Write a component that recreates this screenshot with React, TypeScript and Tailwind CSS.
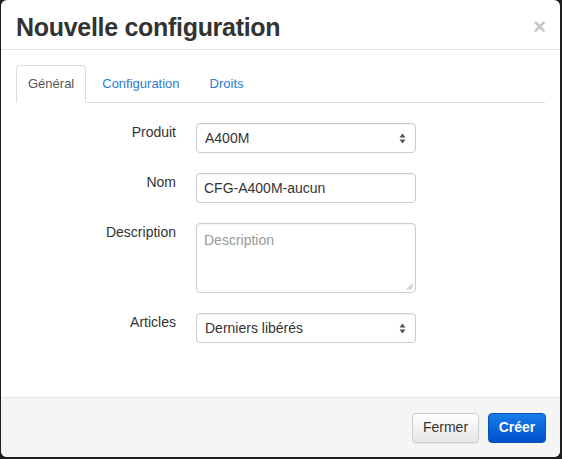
import { ReactNode } from "react";

type FieldProps = {
  label: string;
  children: ReactNode;
};

const Field = ({ label, children }: FieldProps) => (
  <>
    <label className="text-right text-[14px] leading-[18px] text-[#333]">{label}</label>
    <div>{children}</div>
  </>
);

const SelectArrows = () => (
  <svg width="7" height="11" viewBox="0 0 7 11" className="shrink-0">
    <path d="M3.5 0.5 L6.5 4.5 L0.5 4.5 Z" fill="#555" />
    <path d="M3.5 10.5 L6.5 6.5 L0.5 6.5 Z" fill="#555" />
  </svg>
);

const FakeSelect = ({ value }: { value: string }) => (
  <div className="flex h-[30px] w-[220px] items-center justify-between rounded-[4px] border border-[#ccc] bg-white pl-[8px] pr-[9px] text-[14px] text-[#333] shadow-[inset_0_1px_1px_rgba(0,0,0,0.05)]">
    <span>{value}</span>
    <SelectArrows />
  </div>
);

const tabs = ["Général", "Configuration", "Droits"];

const App = () => {
  return (
    <div className="h-[459px] w-[562px] bg-[#1e1e1e] pb-[2px] pl-[1px] pr-[2px] font-['Liberation_Sans',Arial,sans-serif]">
      <div className="flex h-full flex-col overflow-hidden rounded-[6px] bg-white">
        {/* header */}
        <div className="flex h-[50px] shrink-0 items-center justify-between border-b border-[#e5e5e5] pl-[15px] pr-[14px] pt-[5px]">
          <h4 className="text-[25px] font-bold leading-none tracking-[-0.3px] text-[#333]">Nouvelle configuration</h4>
          <span className="text-[22px] font-bold leading-none text-[#c7c7c7]">×</span>
        </div>

        {/* body */}
        <div className="flex-1 px-[15px] pt-[15px]">
          <ul className="flex border-b border-[#ddd] text-[13px]">
            {tabs.map((t, i) => (
              <li
                key={t}
                className={
                  i === 0
                    ? "-mb-px mr-[2px] rounded-t-[4px] border border-b-transparent border-[#ddd] bg-white px-[11px] py-[9px] leading-[17px] text-[#555]"
                    : "mr-[2px] rounded-t-[4px] border border-transparent px-[13px] py-[9px] leading-[17px] text-[#2b7bd3]"
                }
              >
                {t}
              </li>
            ))}
          </ul>

          <div className="mt-[20px] grid grid-cols-[160px_220px] gap-x-[20px] gap-y-[20px]">
            <Field label="Produit">
              <FakeSelect value="A400M" />
            </Field>
            <Field label="Nom">
              <div className="flex h-[30px] w-[220px] items-center rounded-[4px] border border-[#ccc] bg-white px-[7px] text-[14px] text-[#333] shadow-[inset_0_1px_1px_rgba(0,0,0,0.05)]">
                CFG-A400M-aucun
              </div>
            </Field>
            <Field label="Description">
              <div className="relative h-[70px] w-[220px] rounded-[4px] border border-[#ccc] bg-white px-[7px] pt-[6px] text-[14px] text-[#999] shadow-[inset_0_1px_1px_rgba(0,0,0,0.05)]">
                Description
                <svg width="7" height="7" viewBox="0 0 7 7" className="absolute bottom-[2px] right-[2px]">
                  <path d="M1 6.5 L6.5 1 M3.5 6.5 L6.5 3.5" stroke="#888" strokeWidth="0.9" />
                </svg>
              </div>
            </Field>
            <Field label="Articles">
              <FakeSelect value="Derniers libérés" />
            </Field>
          </div>
        </div>

        {/* footer */}
        <div className="flex h-[60px] shrink-0 items-center justify-end gap-[9px] border-t border-[#e5e5e5] bg-[#f5f5f5] pr-[14px]">
          <button className="h-[30px] w-[67px] rounded-[4px] border border-[#ccc] bg-gradient-to-b from-white to-[#e6e6e6] text-[14px] text-[#333] shadow-[0_1px_1px_rgba(0,0,0,0.06)]">
            Fermer
          </button>
          <button className="h-[30px] w-[58px] rounded-[4px] border border-[#0852b8] bg-gradient-to-b from-[#1a7ceb] to-[#0050c9] text-[14px] font-bold text-white">
            Créer
          </button>
        </div>
      </div>
    </div>
  );
};

export default App;
